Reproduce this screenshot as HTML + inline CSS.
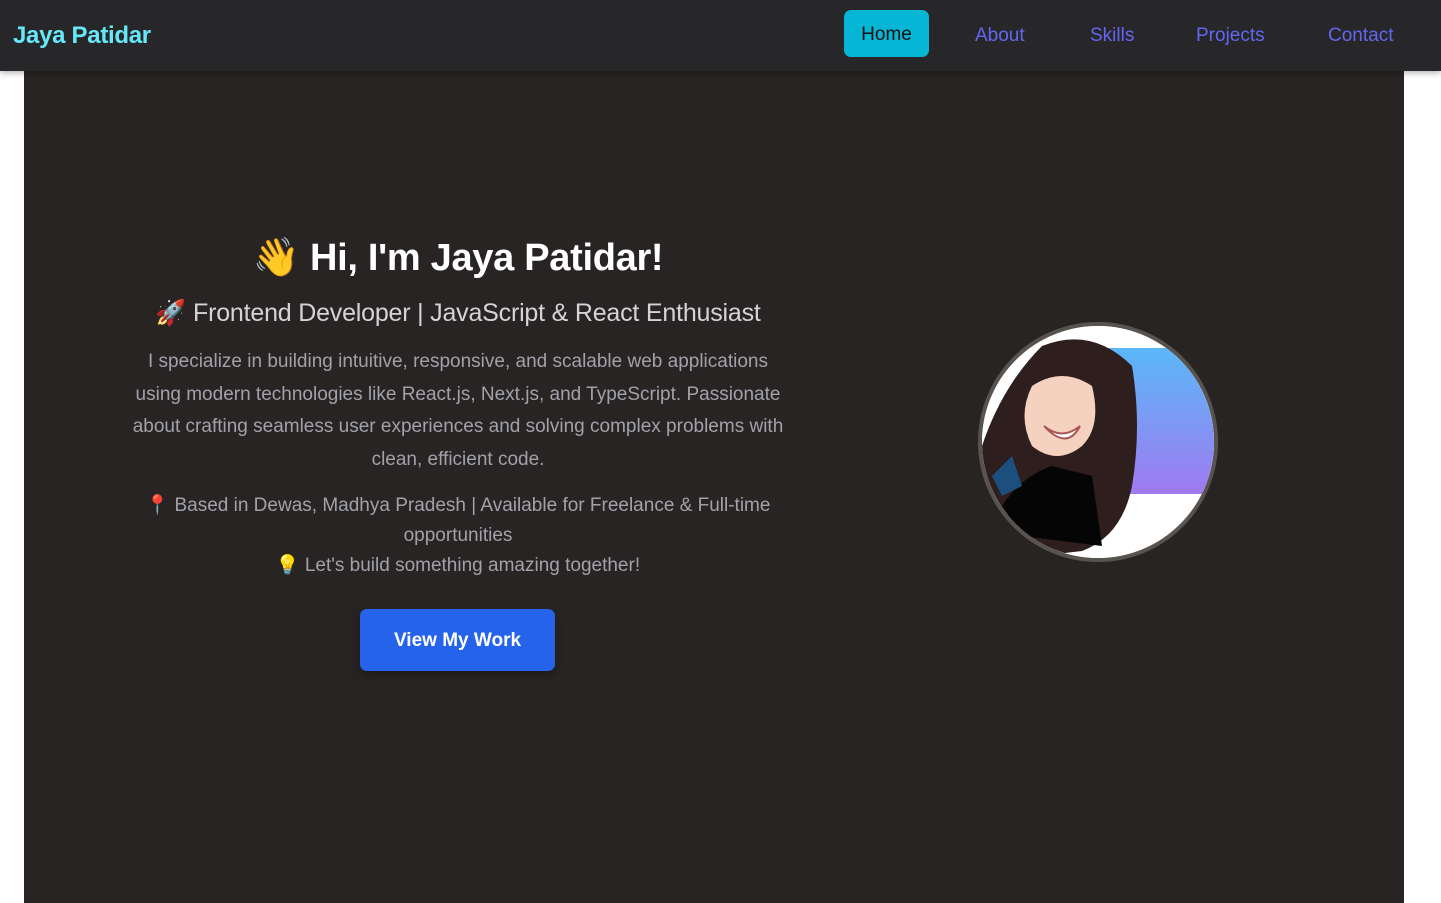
<!DOCTYPE html>
<html><head><meta charset="utf-8"><style>
*{margin:0;padding:0;box-sizing:border-box}
body{width:1441px;height:903px;background:#fff;font-family:"Liberation Sans","DejaVu Sans",sans-serif;overflow:hidden;position:relative}
nav{position:absolute;left:0;top:0;width:1441px;height:71px;background:#27272a;box-shadow:0 2px 6px rgba(0,0,0,.3);z-index:2}
.logo{position:absolute;left:13px;top:22px;color:#67e8f9;font-weight:bold;font-size:24px;letter-spacing:-0.3px}
.nl{position:absolute;top:25px;color:#6366f1;font-size:19px}
.home{position:absolute;left:844px;top:10px;width:85px;height:47px;background:#06b6d4;border-radius:7px;color:#111;font-size:19px;text-align:center;line-height:49px}
main{position:absolute;left:24px;top:71px;width:1380px;height:832px;background:#282423}
.c{position:absolute;left:104px;width:660px;text-align:center}
h1{color:#fff;font-size:38px;font-weight:bold;letter-spacing:-0.3px}
h2{color:#d4d4d8;font-size:25px;font-weight:normal;letter-spacing:-0.2px}
p{color:#a1a1aa;font-size:19px;line-height:32.5px}
.btn{position:absolute;left:336px;top:538px;width:195px;height:62px;background:#2563eb;border-radius:7px;color:#fff;font-weight:bold;font-size:19px;text-align:center;line-height:64px;box-shadow:0 4px 10px rgba(0,0,0,.3)}
.av{position:absolute;left:954px;top:251px;width:240px;height:240px;border-radius:50%;border:4px solid #57534e;overflow:hidden;background:#fff}
</style></head><body>
<nav><div class="logo">Jaya Patidar</div>
<div class="home">Home</div>
<div class="nl" style="left:975px">About</div>
<div class="nl" style="left:1090px">Skills</div>
<div class="nl" style="left:1196px">Projects</div>
<div class="nl" style="left:1328px">Contact</div></nav>
<main>
<div class="c" style="left:84px;width:700px;top:165px"><h1>👋 Hi, I'm Jaya Patidar!</h1></div>
<div class="c" style="left:84px;width:700px;top:228px"><h2>🚀 Frontend Developer | JavaScript &amp; React Enthusiast</h2></div>
<div class="c" style="left:100px;width:668px;top:275px"><p>I specialize in building intuitive, responsive, and scalable web applications using modern technologies like React.js, Next.js, and TypeScript. Passionate about crafting seamless user experiences and solving complex problems with clean, efficient code.</p></div>
<div class="c" style="top:420px"><p style="line-height:30px">📍 Based in Dewas, Madhya Pradesh | Available for Freelance &amp; Full-time opportunities<br>💡 Let's build something amazing together!</p></div>
<div class="btn">View My Work</div>
<div class="av">
<svg width="232" height="232" viewBox="0 0 232 232">
<defs><linearGradient id="g" x1="0" y1="0" x2="0" y2="1"><stop offset="0" stop-color="#5ab8f8"/><stop offset="1" stop-color="#a07af0"/></linearGradient></defs>
<rect x="0" y="0" width="232" height="232" fill="#fff"/>
<rect x="100" y="22" width="132" height="146" fill="url(#g)"/>
<path d="M0 120 Q20 60 60 20 Q110 0 150 40 Q160 100 150 160 Q140 210 100 225 L40 232 L0 232Z" fill="#2e1e1e"/>
<path d="M40 210 L20 180 Q40 150 70 140 L110 150 L120 220Z" fill="#050505"/>
<path d="M50 60 Q80 40 110 60 Q120 100 100 120 Q75 140 50 120 Q35 90 50 60Z" fill="#f5d2c0"/>
<path d="M62 100 Q80 115 98 100 Q85 125 62 100Z" fill="#fff" stroke="#a55" stroke-width="2"/>
<path d="M10 150 L30 130 L40 160 L20 170Z" fill="#1d4f7e"/>
</svg></div>
</main>
</body></html>
